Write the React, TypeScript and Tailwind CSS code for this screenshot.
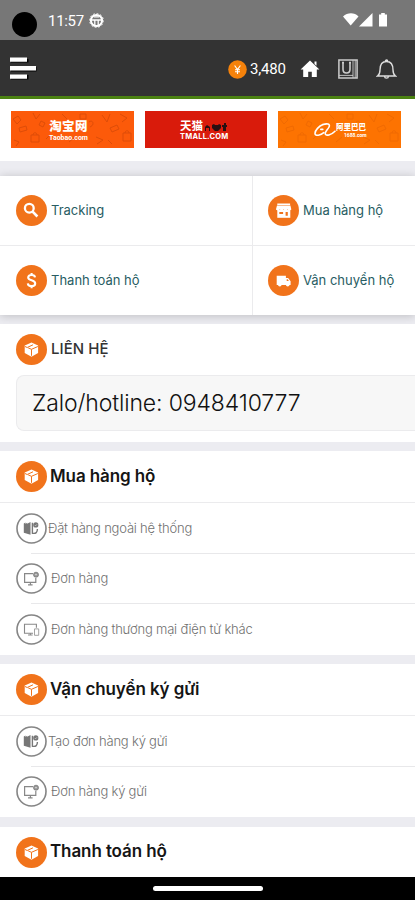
import type { ReactNode } from "react";

const shortcuts = [
  { label: "Tracking", icon: "search" },
  { label: "Mua hàng hộ", icon: "store" },
  { label: "Thanh toán hộ", icon: "dollar" },
  { label: "Vận chuyển hộ", icon: "truck" },
];

const sections = [
  {
    title: "Mua hàng hộ",
    items: [
      { label: "Đặt hàng ngoài hệ thống", icon: "box", gap: "ml-px" },
      { label: "Đơn hàng", icon: "monitor", gap: "ml-1" },
      { label: "Đơn hàng thương mại điện tử khác", icon: "devices", gap: "ml-1" },
    ],
  },
  {
    title: "Vận chuyển ký gửi",
    items: [
      { label: "Tạo đơn hàng ký gửi", icon: "box", gap: "ml-px" },
      { label: "Đơn hàng ký gửi", icon: "monitor", gap: "ml-1" },
    ],
  },
  { title: "Thanh toán hộ", items: [] },
];

function ShortcutIcon({ name }: { name: string }) {
  if (name === "search") {
    return (
      <svg width="31" height="31" viewBox="0 0 31 31" fill="none" stroke="#fff">
        <circle cx="13.3" cy="13.2" r="4.4" strokeWidth="2.3" />
        <path d="M16.6 16.6l4.8 4.9" strokeWidth="2.6" />
      </svg>
    );
  }
  if (name === "dollar") {
    return (
      <svg width="31" height="31" viewBox="0 0 31 31" fill="none" stroke="#fff" strokeWidth="2.1">
        <path d="M19 12.4c-.2-1.7-1.6-2.4-3.4-2.4-2 0-3.4.9-3.4 2.5 0 3.7 7 1.9 7 5.9 0 1.7-1.5 2.7-3.6 2.7-2.2 0-3.6-1-3.8-2.8M15.6 8v2.2M15.6 21v2.3" />
      </svg>
    );
  }
  if (name === "store") {
    return (
      <svg width="31" height="31" viewBox="0 0 31 31">
        <path d="M9.3 8.6h12.8V10H9.3zM9 10.4h13.4l.9 3.8c0 .7-1.1 1.2-2 1.2s-1.7-.5-1.9-1.1c-.2.6-1 1.1-1.9 1.1s-1.7-.5-1.9-1.1c-.2.6-1 1.1-1.9 1.1s-1.7-.5-1.9-1.1c-.2.6-1 1.1-1.9 1.1-.9 0-1.9-.5-1.9-1.2z" fill="#fff" />
        <path d="M9.3 15h13v7.8h-13z" fill="#fff" />
        <path d="M11.3 17h3.8v2h-3.8zM17.6 17h2.2v3.8h-2.2z" fill="#f1731b" />
      </svg>
    );
  }
  return (
    <svg width="31" height="31" viewBox="0 0 31 31">
      <path d="M8.7 10.8h9.2v2.3h2.2l2.5 3.2V20H8.7z" fill="#fff" />
      <circle cx="11.8" cy="19.8" r="1.8" fill="#fff" />
      <circle cx="19.7" cy="19.8" r="1.8" fill="#fff" />
      <path d="M18.7 14.2h1l1.2 1.7h-2.2z" fill="#f1731b" />
    </svg>
  );
}

function PackageIcon() {
  return (
    <svg width="31" height="31" viewBox="0 0 31 31">
      <path d="M15.5 8.4l6.6 3v7.7l-6.6 3.6-6.8-3.6v-7.7z" fill="#fff" />
      <path d="M12.2 13.9l3.3 1.4 6.4-2.8M15.5 15.3v6.5M9 12.5l2.2 1L17 10.8" fill="none" stroke="#f1731b" strokeWidth="1" />
    </svg>
  );
}

function RowIcon({ name }: { name: string }) {
  return (
    <svg width="31" height="31" viewBox="0 0 31 31" fill="none" stroke="#777" className="shrink-0">
      <circle cx="15.5" cy="15.5" r="14.5" stroke="#858585" strokeWidth="1.6" />
      {name === "box" && (
        <>
          <path d="M7.8 10.5l1.7-1v1.5l1.6-1.3v1.1l3.4-1.8v12.8l-6.7-2z" fill="#777" stroke="none" />
          <path d="M16.4 9.8v10.4c3.6.6 5-.8 5-4.2" strokeWidth="1.4" />
          <circle cx="19.8" cy="11.9" r="2.6" fill="#777" stroke="none" />
          <path d="M18.8 12l.8.8 1.4-1.5" stroke="#ddd" strokeWidth=".7" />
        </>
      )}
      {name === "monitor" && (
        <>
          <path d="M17 10.7H8.6v8.7h11.2v-4.5" stroke="#888" strokeWidth="1.2" />
          <path d="M14.4 19.4v2.2M12 21.8h4.6" stroke="#888" strokeWidth="1.2" />
          <circle cx="20" cy="11.7" r="2.5" fill="#999" strokeWidth=".8" />
          <path d="M19 11.7h2" stroke="#eee" strokeWidth=".7" />
        </>
      )}
      {name === "devices" && (
        <>
          <path d="M17 19.2H8.5V10.3h11.9v3.4" stroke="#888" strokeWidth="1.1" />
          <path d="M14.3 19.2v1.8M12 21h4.6" stroke="#888" strokeWidth="1.1" />
          <path d="M18.5 14.9h4.2v6.4h-4.2z" stroke="#999" strokeWidth=".9" />
        </>
      )}
    </svg>
  );
}

function Badge({ children }: { children: ReactNode }) {
  return <div className="size-[31px] shrink-0 rounded-full bg-[#f1731b]">{children}</div>;
}

function StatusBar() {
  return (
    <div className="flex h-10 shrink-0 items-center bg-[#777] text-white">
      <div className="mt-2 ml-3 size-[25px] rounded-full bg-black" />
      <span className="mt-0.5 ml-[11px] font-[Roboto] text-[15px] tracking-[-0.3px]">11:57</span>
      <svg width="15" height="15" viewBox="0 0 15 15" fill="none" stroke="#fff" className="mt-px ml-[5px]">
        <circle cx="7.5" cy="7.5" r="5.6" strokeWidth="2" />
        <path d="M2.5 7h10M5.8 7v5.4M9.2 7v5.4M4.8 3.8h5.4" strokeWidth="1.3" />
        <circle cx="7.5" cy="7.5" r="6.9" strokeWidth=".9" strokeDasharray="1.8 1.8" />
      </svg>
      <svg width="47" height="16" viewBox="0 0 47 16" fill="#fff" className="mr-[25px] ml-auto">
        <path d="M0 4.6C4.5.2 11.5.2 15.5 4.6L7.7 13.5z" />
        <path d="M29.5 1v13.5H16z" />
        <path d="M36 2.5h2.2V1h3.6v1.5H44v12h-8z" />
      </svg>
    </div>
  );
}

function Header() {
  return (
    <header className="flex h-[59px] shrink-0 items-center border-b-[3px] border-[#4b8212] bg-[#333]">
      <svg width="27" height="23" viewBox="0 0 27 23" className="mt-px ml-2.5">
        <path d="M1 2h17.5v3.5H1zM1 10h25.5v4.4H1zM1 18h17.5v4.4H1z" fill="#000" />
        <path d="M0 .5h17v4.3H0zM0 9h26v4.6H0zM0 17.4h17v4.4H0z" fill="#fff" />
      </svg>
      <div className="mt-0.5 ml-auto flex items-center pr-[18px]">
        <svg width="19" height="19" viewBox="0 0 19 19" fill="none">
          <circle cx="9.5" cy="9.5" r="9.3" fill="#f5820b" />
          <path d="M6.6 5.5l2.9 4 2.9-4M9.5 9.5V14M7 9.7h5M7 11.7h5" stroke="#fff" strokeWidth="1.1" />
        </svg>
        <span className="ml-[3px] w-[37px] font-[Roboto] text-[15px] tracking-[-0.2px] whitespace-nowrap text-white">3,480</span>
        <svg width="20" height="18" viewBox="0 0 20 18" fill="#fff" className="ml-[13px]">
          <path d="M10 .5L19.4 9.6H16.8V17h-5v-5.3H8.2V17h-5V9.6H.6z" />
          <path d="M14.5 1.5h2v4.2l-2-1.8z" />
        </svg>
        <svg width="20" height="20" viewBox="0 0 20 20" fill="none" stroke="#ccc" className="ml-[18px]">
          <path d="M.9.9h18.2v18.2H.9z" strokeWidth="1.5" />
          <path d="M15 1v18M17.2 1v18M1 16.4h14" strokeWidth=".9" />
          <path d="M5 3.4v6.8c0 5 7 5 7 0V3.4M4 3.6h2M11 3.6h2" strokeWidth="1.6" />
        </svg>
        <svg width="21" height="21" viewBox="0 0 21 21" fill="none" stroke="#ddd" strokeWidth="1.4" className="ml-[18px]">
          <path d="M1.5 17c2-1.4 2.5-3.3 2.5-6C4 5.5 6.2 2.5 10.5 2.5S17 5.5 17 11c0 2.7.5 4.6 2.5 6zM9.3 2.5c0-2 2.4-2 2.4 0M8.5 17.2c.2 2.5 3.8 2.5 4 0" />
        </svg>
      </div>
    </header>
  );
}

function Doodles({ color }: { color: string }) {
  return (
    <svg width="123" height="37" viewBox="0 0 123 37" fill="none" stroke={color} className="absolute inset-0">
      <path d="M2 8l5-3 3 4-4 4zM22 2l3 6 4-5M8 17l7-2 1 4-7 2zM3 29l5 2-3 4M20 24h8v7h-8zM22 24c0-3 4-3 4 0M30 10l4 2-2 4-4-2zM35 28l4-4M51 3l5 5M58 31l6-5M69 3h6v5h-6zM78 11c4-3 6 3 1 5M91 4l5 7 3-8M109 3l7 4-5 4M85 26l7 3-6 4M99 17l7-3 2 4-7 3zM112 22h8v8h-8zM114 22c0-3 4-3 4 0M97 29l4 4" />
    </svg>
  );
}

function Banners() {
  return (
    <div className="flex h-[62px] shrink-0 gap-[11px] bg-white pt-3 pl-[11px] text-white">
      <div className="relative h-[37px] w-[123px] overflow-hidden bg-[#fc5a0a]">
        <Doodles color="#de4d08" />
        <div className="relative flex flex-col items-center pt-[7px] pr-2">
          <p className="font-['Noto_Sans_CJK_SC',sans-serif] text-[12.5px] leading-4 font-black tracking-[0.3px]">淘宝网</p>
          <p className="font-[Roboto] text-[7px] leading-[8px] font-bold">Taobao.com</p>
        </div>
      </div>
      <div className="flex h-[37px] w-[122px] flex-col bg-[#d91b0b] pt-[7px] pl-[35px]">
        <div className="flex h-[15px] items-center">
          <p className="font-['Noto_Sans_CJK_SC',sans-serif] text-[11.5px] leading-[15px] font-bold">天猫</p>
          <svg width="23" height="9" viewBox="0 0 23 9" fill="#281012" className="mt-1 ml-0.5">
            <path d="M0 8V4l2-2 3 2v4H4V5H1v3zM7 2l2-1 1 1h3l1-1 2 1v3l-3 3h-3L7 5zM19 0h2v2h1v2h-1v4h-3V4h-1V2h2z" />
          </svg>
        </div>
        <p className="font-[Inter] text-[7.5px] leading-[8px] font-bold tracking-[0.2px]">TMALL.COM</p>
      </div>
      <div className="relative flex h-[37px] w-[123px] items-start overflow-hidden bg-[#fd7301]">
        <Doodles color="#f06a02" />
        <svg width="22" height="14" viewBox="0 0 22 14" fill="none" stroke="#fff" strokeLinecap="round" className="relative mt-3 ml-9">
          <path d="M9 1.5C13 .2 16.5.8 15 4c-1.2 2.6-4 4.6-3.8 6.8.3 2.8 6.3 1 9.8-2.6" strokeWidth="1.6" />
          <path d="M9 1.5C5 3 1 7.3 1 10.4c0 3.2 6 1.8 8.8-.8M6.8 6.4h2" strokeWidth="1.6" />
        </svg>
        <div className="relative mt-2.5">
          <p className="font-['Noto_Sans_CJK_SC',sans-serif] text-[7.5px] leading-[11px] font-black">阿里巴巴</p>
          <p className="pl-2 font-[Roboto] text-[5px] leading-[6px] font-bold">1688.com</p>
        </div>
      </div>
    </div>
  );
}

export default function App() {
  return (
    <div className="flex h-[900px] w-[415px] flex-col overflow-hidden bg-[#ececf1] font-[Inter,sans-serif]">
      <StatusBar />
      <Header />
      <Banners />

      {/* Shortcuts */}
      <div className="mt-[15px] grid h-[139px] shrink-0 grid-cols-[253px_1fr] grid-rows-[70px_69px] bg-white shadow-[0_1px_9px_rgba(0,0,0,0.2)]">
        {shortcuts.map((item, i) => (
          <div
            key={item.label}
            className={`flex items-center border-[#ebebed] ${i % 2 === 0 ? "border-r pl-4" : "pl-[15px]"} ${i < 2 ? "border-b" : ""}`}
          >
            <Badge>
              <ShortcutIcon name={item.icon} />
            </Badge>
            <span className="ml-1 text-[13px] whitespace-nowrap text-[#285d63]">{item.label}</span>
          </div>
        ))}
      </div>

      {/* Contact */}
      <div className="mt-[9px] h-[117.5px] shrink-0 bg-white pt-2.5 pl-4">
        <div className="flex items-center">
          <Badge>
            <PackageIcon />
          </Badge>
          <h2 className="ml-1 text-[15px] font-medium tracking-[0.05px] text-[#333]">LIÊN HỆ</h2>
        </div>
        <div className="mt-[10px] flex h-[56px] items-center rounded-l-lg border border-r-0 border-[#ebebed] bg-[#f7f7f7] pl-[15px]">
          <span className="text-[23px] font-light tracking-[-0.13px] whitespace-nowrap text-[#111]">Zalo/hotline: 0948410777</span>
        </div>
      </div>

      {/* Menu sections */}
      <div className="flex h-[435.5px] shrink-0 flex-col gap-[9.5px] overflow-hidden pt-[9.5px]">
        {sections.map((section) => (
          <section key={section.title} className="shrink-0 bg-white">
            <div className="flex h-[52px] items-center border-b border-[#ebebed] pl-4">
              <Badge>
                <PackageIcon />
              </Badge>
              <h2 className="ml-[3px] text-[17px] font-semibold tracking-[-0.1px] whitespace-nowrap text-[#151515]">{section.title}</h2>
            </div>
            {section.items.map((item, i) => (
              <div key={item.label} className="relative flex h-[50.5px] items-center pl-4">
                {i > 0 && <div className="absolute -top-px right-0 left-[31px] h-px bg-[#e8e8ea]" />}
                <RowIcon name={item.icon} />
                <span className={`text-[13px] font-light tracking-[-0.2px] whitespace-nowrap text-[#707070] ${item.gap}`}>{item.label}</span>
              </div>
            ))}
          </section>
        ))}
      </div>

      <div className="flex h-[23px] shrink-0 justify-center bg-black pt-[9px]">
        <div className="h-[5px] w-[110px] rounded-full bg-white" />
      </div>
    </div>
  );
}
